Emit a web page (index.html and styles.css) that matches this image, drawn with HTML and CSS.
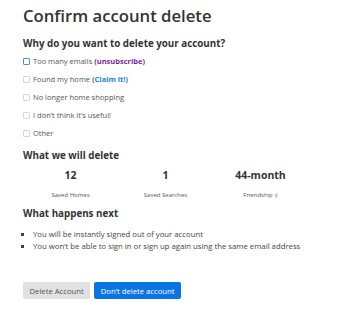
FILE: index.html
```html
<!doctype html>
<html lang="en">
<head>
    <meta charset="utf-8">
    <title>Confirm account delete</title>
    <link rel="stylesheet" href="styles.css">
</head>
<body class="delete-body">
<main class="delete-page">
    <h1 class="delete-title">Confirm account delete</h1>

    <h2 class="delete-subtitle">Why do you want to delete your account?</h2>
    <ul class="reason-list">
        <li class="reason"><span class="box box-focus"></span>Too many emails <a class="link-purple" href="#">(unsubscribe)</a></li>
        <li class="reason"><span class="box"></span>Found my home <a class="link-blue" href="#">(Claim it!)</a></li>
        <li class="reason"><span class="box"></span>No longer home shopping</li>
        <li class="reason"><span class="box"></span>I don&rsquo;t think it&rsquo;s useful!</li>
        <li class="reason"><span class="box"></span>Other</li>
    </ul>

    <h2 class="delete-subtitle section-gap">What we will delete</h2>
    <div class="stats">
        <div class="stat">
            <div class="stat-num">12</div>
            <div class="stat-label">Saved Homes</div>
        </div>
        <div class="stat">
            <div class="stat-num">1</div>
            <div class="stat-label">Saved Searches</div>
        </div>
        <div class="stat">
            <div class="stat-num">44-month</div>
            <div class="stat-label">Friendship :(</div>
        </div>
    </div>

    <h2 class="delete-subtitle next-gap">What happens next</h2>
    <ul class="next-list">
        <li>You will be instantly signed out of your account</li>
        <li>You won&rsquo;t be able to sign in or sign up again using the same email address</li>
    </ul>

    <div class="actions">
        <button class="btn btn-grey">Delete Account</button>
        <button class="btn btn-blue">Don&rsquo;t delete account</button>
    </div>
</main>
</body>
</html>
```

FILE: styles.css
```css
.delete-body {
    margin: 0;
    background: #ffffff;
    color: #3b3b3b;
    font-family: "Open Sans", sans-serif;
}

.delete-page {
    padding: 4px 0 0 23px;
}

.delete-title {
    margin: 0;
    font-size: 16.7px;
    font-weight: 600;
    line-height: 24px;
    color: #333;
}

.delete-subtitle {
    margin: 8px 0 0;
    font-size: 9.8px;
    font-weight: 700;
    line-height: 16px;
    color: #333;
}

.section-gap {
    margin-top: 6px;
}

.next-gap {
    margin-top: 7px;
}

.reason-list {
    list-style: none;
    margin: 0;
    padding: 0;
}

.reason {
    display: flex;
    align-items: center;
    height: 18px;
    font-size: 7.5px;
    color: #555;
}

.box {
    width: 7px;
    height: 7px;
    border: 1px solid #d6d6d6;
    border-radius: 1px;
    margin-right: 3px;
    box-sizing: border-box;
}

.box-focus {
    border-color: #4a90e2;
}

.reason a {
    margin-left: 2px;
    font-weight: 700;
    text-decoration: none;
}

.link-purple {
    color: #7b1fa2;
}

.link-blue {
    color: #1a7fe6;
}

.stats {
    display: flex;
    width: 285px;
    margin-top: 3px;
}

.stat {
    flex: 1;
    text-align: center;
}

.stat-num {
    font-size: 10.5px;
    font-weight: 700;
    line-height: 16px;
    color: #333;
}

.stat-label {
    margin-top: 8px;
    font-size: 6px;
    line-height: 8px;
    color: #555;
}

.next-list {
    margin: 6px 0 0;
    padding: 0 0 0 10px;
    list-style: square;
    font-size: 7.75px;
    line-height: 12px;
    color: #444;
}

.actions {
    display: flex;
    gap: 4px;
    margin-top: 30px;
}

.btn {
    border: 0;
    border-radius: 2px;
    height: 17px;
    padding: 0 6.5px;
    font-family: "Open Sans", sans-serif;
    font-size: 7.7px;
}

.btn-grey {
    background: #e1e1e1;
    color: #555;
}

.btn-blue {
    background: #0b74e5;
    color: #ffffff;
}
```
